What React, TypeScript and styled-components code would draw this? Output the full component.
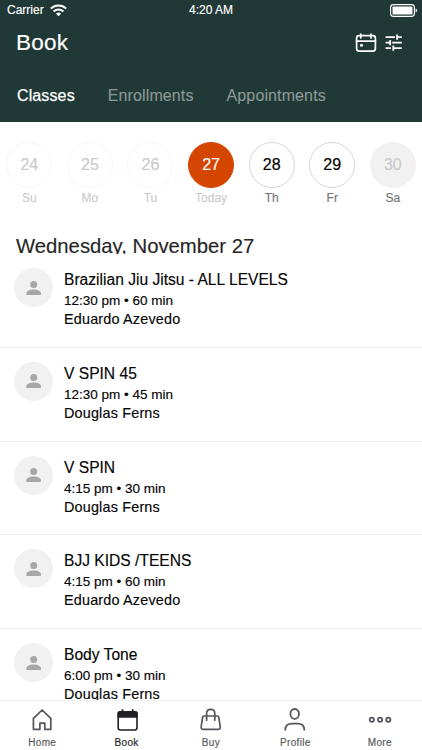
import React from "react";
import styled, { createGlobalStyle } from "styled-components";

const GlobalStyle = createGlobalStyle`
  * { box-sizing: border-box; }
  body {
    margin: 0;
    background: #fff;
    font-family: "Liberation Sans", Arial, sans-serif;
    color: #050505;
    -webkit-font-smoothing: antialiased;
  }
`;

const Screen = styled.div`
  width: 422px;
  height: 750px;
  display: flex;
  flex-direction: column;
  overflow: hidden;
  background: #fff;
  -webkit-text-stroke: 0.15px;
`;

const Header = styled.header`
  height: 122px;
  flex: none;
  background: #203936;
  color: #fff;
`;

const StatusBar = styled.div`
  height: 20px;
  display: grid;
  grid-template-columns: 1fr auto 1fr;
  align-items: center;
  padding: 0 4px 0 7px;
  font-size: 12px;
  line-height: 20px;
`;

const Carrier = styled.div`
  display: flex;
  align-items: center;
  gap: 6px;
`;

const Clock = styled.div`
  margin: -1px 3px 0 0;
`;

const Battery = styled.div`
  display: flex;
  justify-content: flex-end;
`;

const TitleBar = styled.div`
  height: 46px;
  display: flex;
  align-items: center;
  justify-content: space-between;
  padding: 0 19px 0 16px;
`;

const Title = styled.h1`
  margin: 0;
  font-size: 22.5px;
  font-weight: 400;
  letter-spacing: 0.2px;
`;

const Actions = styled.div`
  display: flex;
  align-items: center;
  gap: 8px;
`;

const Tabs = styled.nav`
  height: 56px;
  display: flex;
  align-items: center;
  gap: 33px;
  padding: 4px 0 0 17px;
`;

const Tab = styled.span<{ $active?: boolean }>`
  font-size: 16px;
  letter-spacing: 0.12px;
  color: ${(p) => (p.$active ? "#fff" : "#8b9997")};
  -webkit-text-stroke: ${(p) => (p.$active ? "0.25px" : "0.1px")};
`;

const Week = styled.div`
  flex: none;
  height: 110px;
  display: grid;
  grid-template-columns: repeat(7, 60.6px);
  padding-top: 19.5px;
  margin-left: -1px;
`;

const Day = styled.div`
  display: flex;
  flex-direction: column;
  align-items: center;
`;

type DayKind = "past" | "today" | "open" | "closed";

const dayLooks: Record<DayKind, { bg: string; line: string; ink: string; label: string }> = {
  past: { bg: "#fff", line: "#f5f5f5", ink: "#cbcbcb", label: "#cbcbcb" },
  today: { bg: "#d44500", line: "#d44500", ink: "#fff", label: "#cbcbcb" },
  open: { bg: "#fff", line: "#d6d6d6", ink: "#050505", label: "#757575" },
  closed: { bg: "#f1f1f1", line: "#f1f1f1", ink: "#cbcbcb", label: "#757575" },
};

const DayCircle = styled.div<{ $kind: DayKind }>`
  width: 46px;
  height: 46px;
  border-radius: 50%;
  display: flex;
  align-items: center;
  justify-content: center;
  font-size: 16px;
  background: ${(p) => dayLooks[p.$kind].bg};
  border: 1px solid ${(p) => dayLooks[p.$kind].line};
  color: ${(p) => dayLooks[p.$kind].ink};
  -webkit-text-stroke: 0.2px;
`;

const DayLabel = styled.div<{ $kind: DayKind }>`
  margin-top: 2px;
  font-size: 12px;
  line-height: 16px;
  color: ${(p) => dayLooks[p.$kind].label};
`;

const DateHeading = styled.h2`
  flex: none;
  height: 22px;
  margin: 0;
  padding-left: 16px;
  overflow: hidden;
  font-size: 20.3px;
  font-weight: 400;
  line-height: 29px;
  white-space: nowrap;
  color: #262626;
`;

const ClassList = styled.main`
  flex: 1;
  min-height: 0;
  overflow: hidden;
`;

const ClassRow = styled.article`
  height: 93.75px;
  display: flex;
  gap: 11px;
  padding: 14px 0 0 14px;
  border-bottom: 1px solid #f1f1f1;
`;

const Avatar = styled.div`
  width: 39px;
  height: 39px;
  flex: none;
  border-radius: 50%;
  background: #f1f1f1;
  display: flex;
  align-items: center;
  justify-content: center;
`;

const ClassInfo = styled.div`
  display: flex;
  flex-direction: column;
  white-space: nowrap;
`;

const ClassName = styled.div`
  margin-top: 1px;
  font-size: 15.6px;
  line-height: 22px;
`;

const ClassTime = styled.div`
  font-size: 13.5px;
  line-height: 19px;
`;

const Teacher = styled.div`
  font-size: 14.4px;
  line-height: 18px;
  letter-spacing: 0.18px;
`;

const TabBar = styled.nav`
  flex: none;
  height: 50px;
  display: grid;
  grid-template-columns: repeat(5, 1fr);
  border-top: 1px solid #f1f1f1;
  background: #fff;
`;

const NavItem = styled.div<{ $active?: boolean }>`
  display: flex;
  flex-direction: column;
  align-items: center;
  padding-top: 7px;
  font-size: 10px;
  line-height: 12px;
  letter-spacing: 0.35px;
  color: ${(p) => (p.$active ? "#202126" : "#55565b")};
  svg { margin-bottom: 5px; }
`;

const WifiIcon = () => (
  <svg width="17" height="13" viewBox="0 0 17 13" fill="none" stroke="#fff">
    <path d="M.8 4.6a11 11 0 0 1 15.4 0" strokeWidth="2" />
    <path d="M3.6 7.5a7 7 0 0 1 9.8 0" strokeWidth="2" />
    <path d="M8.5 12.3 5.9 9.7a3.8 3.8 0 0 1 5.2 0z" fill="#fff" stroke="none" />
  </svg>
);

const BatteryIcon = () => (
  <svg width="28" height="13" viewBox="0 0 28 13">
    <rect x=".6" y=".6" width="23.8" height="11.8" rx="2.8" fill="none" stroke="#fff" strokeWidth="1.1" />
    <rect x="2.5" y="2.4" width="20" height="8.2" rx="1.2" fill="#fff" />
    <path d="M25.6 4.4v4.2q1.6-.6 1.6-2.1t-1.6-2.1z" fill="#fff" />
  </svg>
);

const CalendarIcon = () => (
  <svg width="22" height="20" viewBox="0 0 22 20" fill="none" stroke="#fff" strokeWidth="1.7" strokeLinecap="round">
    <rect x="1.6" y="2.6" width="18.8" height="15.5" rx="2.6" />
    <path d="M1.6 8.2h18.8M5.8 1v4M16 1v4" />
    <circle cx="6.5" cy="12.2" r="1.5" fill="#fff" stroke="none" />
  </svg>
);

const FilterIcon = () => (
  <svg width="18" height="18" viewBox="0 0 18 18" fill="none" stroke="#fff" strokeWidth="1.8">
    <path d="M.6 3.1h9.3M12.2 3.1h4.6M12.1.5v5.2M.6 8.7h4.3M7.2 8.7h9.6M5.2 6.1v5.2M.6 14.1h5.3M8.3 14.1h8.5M8.3 11.5v5.2" />
  </svg>
);

const PersonIcon = () => (
  <svg width="16" height="16" viewBox="0 0 16 16" fill="#a7a7a7">
    <circle cx="7.7" cy="4.4" r="3.5" />
    <path d="M.4 14.9v-2c0-2.3 3.7-3.5 7.3-3.5s7.2 1.2 7.2 3.5v2z" />
  </svg>
);

const navStroke = {
  width: 24,
  height: 24,
  viewBox: "0 0 24 24",
  fill: "none",
  stroke: "currentColor",
  strokeWidth: 1.7,
};

const HomeIcon = () => (
  <svg {...navStroke}>
    <path d="M3.4 10.3 12.1 2l8.7 8.3v11h-6v-6.2h-4.9v6.2H3.4z" strokeLinejoin="round" />
  </svg>
);

const BookIcon = () => (
  <svg {...navStroke}>
    <rect x="3.2" y="3.7" width="18.8" height="18.3" rx="2.2" strokeWidth="1.6" />
    <path d="M2.5 5q0-1.8 2-1.8h16.2q2 0 2 1.8v4.7H2.5z" fill="currentColor" stroke="none" />
    <path d="M7.5 1.2v4M17.7 1.2v4" strokeWidth="1.8" />
  </svg>
);

const BuyIcon = () => (
  <svg {...navStroke} strokeLinecap="round" strokeLinejoin="round">
    <path d="M5 8h13.4q1.2 0 1.4 1.2l1.4 9.4q.4 2.8-2.2 2.8H4.4q-2.6 0-2.2-2.8l1.4-9.4Q3.8 8 5 8z" />
    <path d="M7.6 12.2V5.5Q7.6 1.3 11.7 1.3t4.1 4.2v6.7" />
  </svg>
);

const ProfileIcon = () => (
  <svg {...navStroke} strokeWidth={1.8}>
    <ellipse cx="11.7" cy="5.9" rx="4.3" ry="4.9" />
    <path d="M2.3 22.6v-.8q0-6.2 6.8-6.2h5.4q6.8 0 6.8 6.2v.8" />
  </svg>
);

const MoreIcon = () => (
  <svg {...navStroke} strokeWidth={1.8}>
    <circle cx="3.8" cy="11.7" r="2.1" />
    <circle cx="12.1" cy="11.7" r="2.1" />
    <circle cx="20.3" cy="11.7" r="2.1" />
  </svg>
);

const days: { date: number; label: string; kind: DayKind }[] = [
  { date: 24, label: "Su", kind: "past" },
  { date: 25, label: "Mo", kind: "past" },
  { date: 26, label: "Tu", kind: "past" },
  { date: 27, label: "Today", kind: "today" },
  { date: 28, label: "Th", kind: "open" },
  { date: 29, label: "Fr", kind: "open" },
  { date: 30, label: "Sa", kind: "closed" },
];

const classes = [
  { name: "Brazilian Jiu Jitsu - ALL LEVELS", time: "12:30 pm • 60 min", teacher: "Eduardo Azevedo" },
  { name: "V SPIN 45", time: "12:30 pm • 45 min", teacher: "Douglas Ferns" },
  { name: "V SPIN", time: "4:15 pm • 30 min", teacher: "Douglas Ferns" },
  { name: "BJJ KIDS /TEENS", time: "4:15 pm • 60 min", teacher: "Eduardo Azevedo" },
  { name: "Body Tone", time: "6:00 pm • 30 min", teacher: "Douglas Ferns" },
];

const navItems = [
  { label: "Home", Icon: HomeIcon },
  { label: "Book", Icon: BookIcon, active: true },
  { label: "Buy", Icon: BuyIcon },
  { label: "Profile", Icon: ProfileIcon },
  { label: "More", Icon: MoreIcon },
];

export default function App() {
  return (
    <>
      <GlobalStyle />
      <Screen>
        <Header>
          <StatusBar>
            <Carrier>
              Carrier
              <WifiIcon />
            </Carrier>
            <Clock>4:20 AM</Clock>
            <Battery>
              <BatteryIcon />
            </Battery>
          </StatusBar>
          <TitleBar>
            <Title>Book</Title>
            <Actions>
              <CalendarIcon />
              <FilterIcon />
            </Actions>
          </TitleBar>
          <Tabs>
            <Tab $active>Classes</Tab>
            <Tab>Enrollments</Tab>
            <Tab>Appointments</Tab>
          </Tabs>
        </Header>
        <Week>
          {days.map((d) => (
            <Day key={d.date}>
              <DayCircle $kind={d.kind}>{d.date}</DayCircle>
              <DayLabel $kind={d.kind}>{d.label}</DayLabel>
            </Day>
          ))}
        </Week>
        <DateHeading>Wednesday, November 27</DateHeading>
        <ClassList>
          {classes.map((c, i) => (
            <ClassRow key={i}>
              <Avatar>
                <PersonIcon />
              </Avatar>
              <ClassInfo>
                <ClassName>{c.name}</ClassName>
                <ClassTime>{c.time}</ClassTime>
                <Teacher>{c.teacher}</Teacher>
              </ClassInfo>
            </ClassRow>
          ))}
        </ClassList>
        <TabBar>
          {navItems.map(({ label, Icon, active }) => (
            <NavItem key={label} $active={active}>
              <Icon />
              {label}
            </NavItem>
          ))}
        </TabBar>
      </Screen>
    </>
  );
}
